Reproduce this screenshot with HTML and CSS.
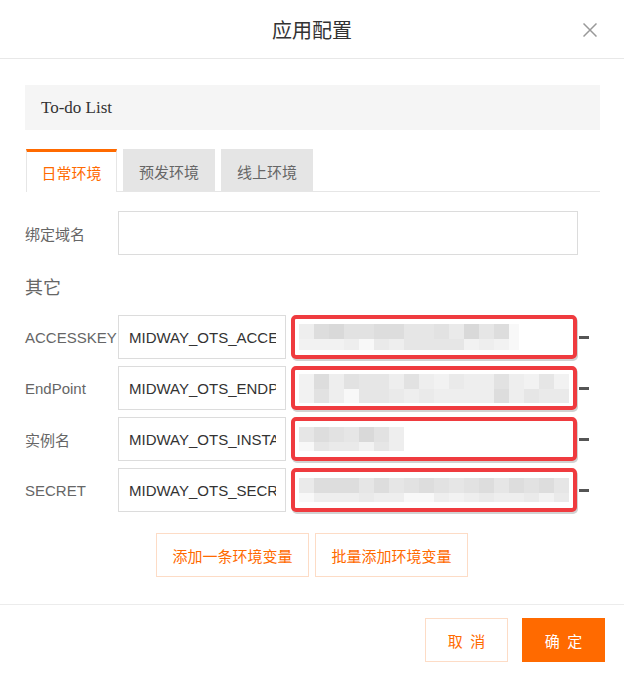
FILE: index.html
```html
<!DOCTYPE html>
<html lang="zh-CN">
<head>
<meta charset="utf-8">
<title>应用配置</title>
<link rel="stylesheet" href="styles.css">
</head>
<body>
<div class="dialog">
  <header class="header">
    <span></span>
    <h1 class="title">应用配置</h1>
    <button class="close" aria-label="关闭">
      <svg width="14" height="14" viewBox="0 0 14 14"><path d="M0.5 0.5 L13.5 13.5 M13.5 0.5 L0.5 13.5" stroke="#999" stroke-width="1.5" fill="none"/></svg>
    </button>
  </header>

  <main class="body">
    <div class="app-name">To-do List</div>

    <div class="tabs">
      <div class="tab active">日常环境</div>
      <div class="tab">预发环境</div>
      <div class="tab">线上环境</div>
    </div>

    <div class="field domain">
      <label class="label">绑定域名</label>
      <input class="input wide" type="text" value="">
    </div>

    <h2 class="section">其它</h2>

    <div class="env-list">
      <div class="env-row">
        <label class="label">ACCESSKEY</label>
        <input class="input key" type="text" value="MIDWAY_OTS_ACCESSKEY" readonly>
        <div class="value">
          <div class="mosaic">
            <div class="mrow top"><i class="s6"></i><i class="s2"></i><i class="s1"></i><i class="s3"></i><i class="s3"></i><i class="s2"></i><i class="s2"></i><i class="s4"></i><i class="s4"></i><i class="s3"></i><i class="s5"></i><i class="s1"></i><i class="s4"></i><i class="s2"></i><i class="s8 narrow"></i></div>
            <div class="mrow bottom"><i class="s7"></i><i class="s7"></i><i class="s7"></i><i class="s6"></i><i class="s8"></i><i class="s5"></i><i class="s6"></i><i class="s4"></i><i class="s4"></i><i class="s4"></i><i class="s4"></i><i class="s7"></i><i class="s6"></i><i class="s7"></i><i class="s8 narrow"></i></div>
          </div>
        </div>
        <span class="dash"></span>
      </div>
      <div class="env-row">
        <label class="label">EndPoint</label>
        <input class="input key" type="text" value="MIDWAY_OTS_ENDPOINT" readonly>
        <div class="value">
          <div class="mosaic">
            <div class="mrow top"><i class="s7"></i><i class="s2"></i><i class="s6"></i><i class="s3"></i><i class="s4"></i><i class="s4"></i><i class="s6"></i><i class="s3"></i><i class="s6"></i><i class="s7"></i><i class="s5"></i><i class="s6"></i><i class="s6"></i><i class="s3"></i><i class="s6"></i><i class="s7"></i><i class="s4"></i><i class="s7"></i></div>
            <div class="mrow tall"><i class="s7"></i><i class="s3"></i><i class="s6"></i><i class="s8"></i><i class="s4"></i><i class="s4"></i><i class="s5"></i><i class="s6"></i><i class="s5"></i><i class="s6"></i><i class="s6"></i><i class="s6"></i><i class="s6"></i><i class="s2"></i><i class="s6"></i><i class="s4"></i><i class="s5"></i><i class="s5"></i></div>
          </div>
        </div>
        <span class="dash"></span>
      </div>
      <div class="env-row">
        <label class="label">实例名</label>
        <input class="input key" type="text" value="MIDWAY_OTS_INSTANCE" readonly>
        <div class="value">
          <div class="mosaic">
            <div class="mrow top"><i class="s4"></i><i class="s2"></i><i class="s3"></i><i class="s4"></i><i class="s1"></i><i class="s3"></i><i class="s6"></i></div>
            <div class="mrow low"><i class="s8"></i><i class="s4"></i><i class="s5"></i><i class="s5"></i><i class="s7"></i><i class="s4"></i><i class="s6"></i></div>
          </div>
        </div>
        <span class="dash"></span>
      </div>
      <div class="env-row">
        <label class="label">SECRET</label>
        <input class="input key" type="text" value="MIDWAY_OTS_SECRET" readonly>
        <div class="value">
          <div class="mosaic">
            <div class="mrow top"><i class="s5"></i><i class="s2"></i><i class="s2"></i><i class="s2"></i><i class="s4"></i><i class="s2"></i><i class="s4"></i><i class="s3"></i><i class="s2"></i><i class="s3"></i><i class="s4"></i><i class="s3"></i><i class="s2"></i><i class="s4"></i><i class="s2"></i><i class="s3"></i><i class="s2"></i><i class="s4"></i></div>
            <div class="mrow low"><i class="s8"></i><i class="s6"></i><i class="s6"></i><i class="s6"></i><i class="s5"></i><i class="s6"></i><i class="s6"></i><i class="s8"></i><i class="s8"></i><i class="s6"></i><i class="s7"></i><i class="s6"></i><i class="s5"></i><i class="s6"></i><i class="s6"></i><i class="s5"></i><i class="s7"></i><i class="s5"></i></div>
          </div>
        </div>
        <span class="dash"></span>
      </div>
    </div>

    <div class="add-actions">
      <button class="btn-outline">添加一条环境变量</button>
      <button class="btn-outline">批量添加环境变量</button>
    </div>
  </main>

  <footer class="footer">
    <button class="btn-outline small spaced">取 消</button>
    <button class="btn-primary spaced">确 定</button>
  </footer>
</div>
</body>
</html>
```
FILE: styles.css
```css
* { box-sizing: border-box; }

html, body {
  margin: 0;
  padding: 0;
  background: #fff;
}

body {
  font-family: "Liberation Sans", "Noto Sans CJK SC", sans-serif;
  color: #333;
  width: 624px;
}

.dialog {
  width: 624px;
}

.header {
  height: 59px;
  border-bottom: 1px solid #e8e8e8;
  display: grid;
  grid-template-columns: 1fr auto 1fr;
  align-items: center;
  padding: 0 27px;
}

.title {
  margin: 0;
  font-size: 20px;
  font-weight: normal;
  color: #333;
  line-height: 28px;
  font-family: "Noto Sans CJK SC", sans-serif;
  padding-top: 2px;
}

.close {
  justify-self: end;
  border: 0;
  background: none;
  padding: 0;
  width: 14px;
  height: 14px;
  display: flex;
  margin-top: 1px;
}

.body {
  padding: 26px 24px 0 25px;
}

.app-name {
  height: 45px;
  background: #f5f5f5;
  padding-left: 16px;
  display: flex;
  align-items: center;
  font-family: "Liberation Serif", serif;
  font-size: 17px;
  color: #333;
}

.tabs {
  margin-top: 19px;
  margin-left: 1px;
  display: flex;
  gap: 6px;
  border-bottom: 1px solid #e6e6e6;
  height: 43px;
}

.tab {
  width: 92px;
  height: 42px;
  border-top: 3px solid #e5e5e5;
  background: #e5e5e5;
  color: #666;
  font-size: 15px;
  font-family: "Noto Sans CJK SC", sans-serif;
  display: flex;
  align-items: center;
  justify-content: center;
}

.tab.active {
  width: 91px;
  height: 43px;
  background: #fff;
  border-top: 3px solid #ff6a00;
  border-left: 1px solid #e6e6e6;
  border-right: 1px solid #e6e6e6;
  color: #ff6a00;
}

.field, .env-row {
  display: flex;
  align-items: center;
  height: 44px;
}

.domain {
  margin-top: 19px;
}

.label {
  width: 93px;
  flex: none;
  font-size: 15px;
  color: #666;
  white-space: nowrap;
}

.input {
  height: 44px;
  border: 1px solid #dcdcdc;
  background: #fff;
  font-family: "Liberation Sans", "Noto Sans CJK SC", sans-serif;
  font-size: 15px;
  color: #333;
  padding: 0 9px 0 10px;
  outline: none;
  margin: 0;
  border-radius: 0;
}

.input.wide {
  width: 460px;
}

.input.key {
  width: 168px;
}

.section {
  margin: 19px 0 17px;
  font-size: 18px;
  line-height: 24px;
  font-weight: normal;
  color: #666;
  font-family: "Noto Sans CJK SC", sans-serif;
}

.env-list {
  display: flex;
  flex-direction: column;
  gap: 7px;
}

.value {
  width: 286px;
  height: 44px;
  margin-left: 5px;
  border: 4px solid #ef3b3f;
  border-radius: 5px;
  padding-left: 4px;
  display: flex;
  align-items: center;
  background: #fff;
  box-shadow: 1px 2px 0 0 #d2d2d2;
}

.mosaic {
  display: flex;
  flex-direction: column;
}

.mrow {
  display: flex;
}

.mrow i {
  display: block;
  width: 15px;
}

.mrow i.narrow {
  width: 10px;
}

.mrow.top i { height: 15px; }
.mrow.bottom i { height: 11px; }
.mrow.tall i { height: 14px; }
.mrow.low i { height: 9px; }

.s1 { background: #d9d9d9; }
.s2 { background: #dddddd; }
.s3 { background: #e2e2e2; }
.s4 { background: #e6e6e6; }
.s5 { background: #eaeaea; }
.s6 { background: #eeeeee; }
.s7 { background: #f2f2f2; }
.s8 { background: #f8f8f8; }

.dash {
  width: 10px;
  height: 3px;
  background: #555;
  margin-left: 2px;
}

.add-actions {
  margin-top: 21px;
  display: flex;
  justify-content: center;
  gap: 6px;
  padding-right: 1px;
}

.btn-outline {
  width: 153px;
  height: 44px;
  border: 1px solid #fddcc6;
  background: #fff;
  color: #ff6a00;
  font-size: 15px;
  font-family: "Noto Sans CJK SC", sans-serif;
  padding: 0;
  margin: 0;
}

.btn-outline.small {
  width: 83px;
}

.btn-primary {
  width: 83px;
  height: 44px;
  border: 0;
  background: #ff6a00;
  color: #fff;
  font-size: 15px;
  font-family: "Noto Sans CJK SC", sans-serif;
  padding: 0;
  margin: 0;
}

.spaced {
  letter-spacing: 1px;
  word-spacing: 2px;
  padding-left: 1px;
}

.footer {
  margin-top: 27px;
  border-top: 1px solid #ececec;
  padding: 13px 19px 0 0;
  display: flex;
  justify-content: flex-end;
  gap: 14px;
}
```
